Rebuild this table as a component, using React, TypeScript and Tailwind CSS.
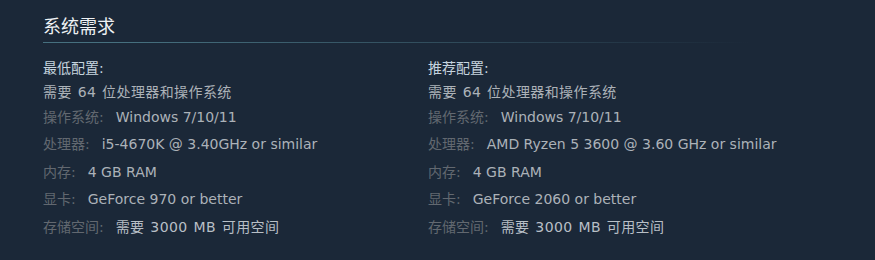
import React from "react";

type Spec = { label: string; value: string };

const minimum: Spec[] = [
  { label: "操作系统", value: "Windows 7/10/11" },
  { label: "处理器", value: "i5-4670K @ 3.40GHz or similar" },
  { label: "内存", value: "4 GB RAM" },
  { label: "显卡", value: "GeForce 970 or better" },
  { label: "存储空间", value: "需要 3000 MB 可用空间" },
];

const recommended: Spec[] = [
  { label: "操作系统", value: "Windows 7/10/11" },
  { label: "处理器", value: "AMD Ryzen 5 3600 @ 3.60 GHz or similar" },
  { label: "内存", value: "4 GB RAM" },
  { label: "显卡", value: "GeForce 2060 or better" },
  { label: "存储空间", value: "需要 3000 MB 可用空间" },
];

// gaps between successive rows, measured off the reference
const rowGap = ["mt-[5px]", "mt-[7.5px]", "mt-[8px]", "mt-[7px]", "mt-[7.5px]"];

// mixed CJK strings run a little wider in the original
const isCjk = (s: string) => /[\u4e00-\u9fff]/.test(s);

function ReqColumn({ title, specs }: { title: string; specs: Spec[] }) {
  return (
    <div className="flex w-[385px] flex-col">
      <div className="leading-[20px] text-[#c6d4df]">{title}:</div>
      <div className="mt-[3.5px] leading-[20px] tracking-[0.4px] text-[#acb2b8] [word-spacing:1px]">
        需要 64 位处理器和操作系统
      </div>
      {specs.map((s, i) => (
        <div key={s.label} className={`${rowGap[i]} whitespace-nowrap leading-[20px]`}>
          <span className="text-[#626870]">{s.label}:</span>
          <span
            className={
              isCjk(s.value)
                ? "ml-[12px] tracking-[0.4px] text-[#b8bfc6] [word-spacing:1px]"
                : "ml-[12px] text-[#acb2b8]"
            }
          >
            {s.value}
          </span>
        </div>
      ))}
    </div>
  );
}

export default function App() {
  return (
    <div
      className="h-[260px] w-[875px] overflow-hidden bg-[#1b2838] pl-[43px] text-[14px]"
      style={{ fontFamily: '"DejaVu Sans", "Noto Sans CJK SC", sans-serif' }}
    >
      <div className="pt-[14px] text-[18px] leading-[26px] text-[#eef1f4]">系统需求</div>
      <div className="mt-[2px] h-px bg-gradient-to-r from-[#46707f] from-10% to-transparent to-85%" />
      <div className="mt-[15px] flex">
        <ReqColumn title="最低配置" specs={minimum} />
        <ReqColumn title="推荐配置" specs={recommended} />
      </div>
    </div>
  );
}
